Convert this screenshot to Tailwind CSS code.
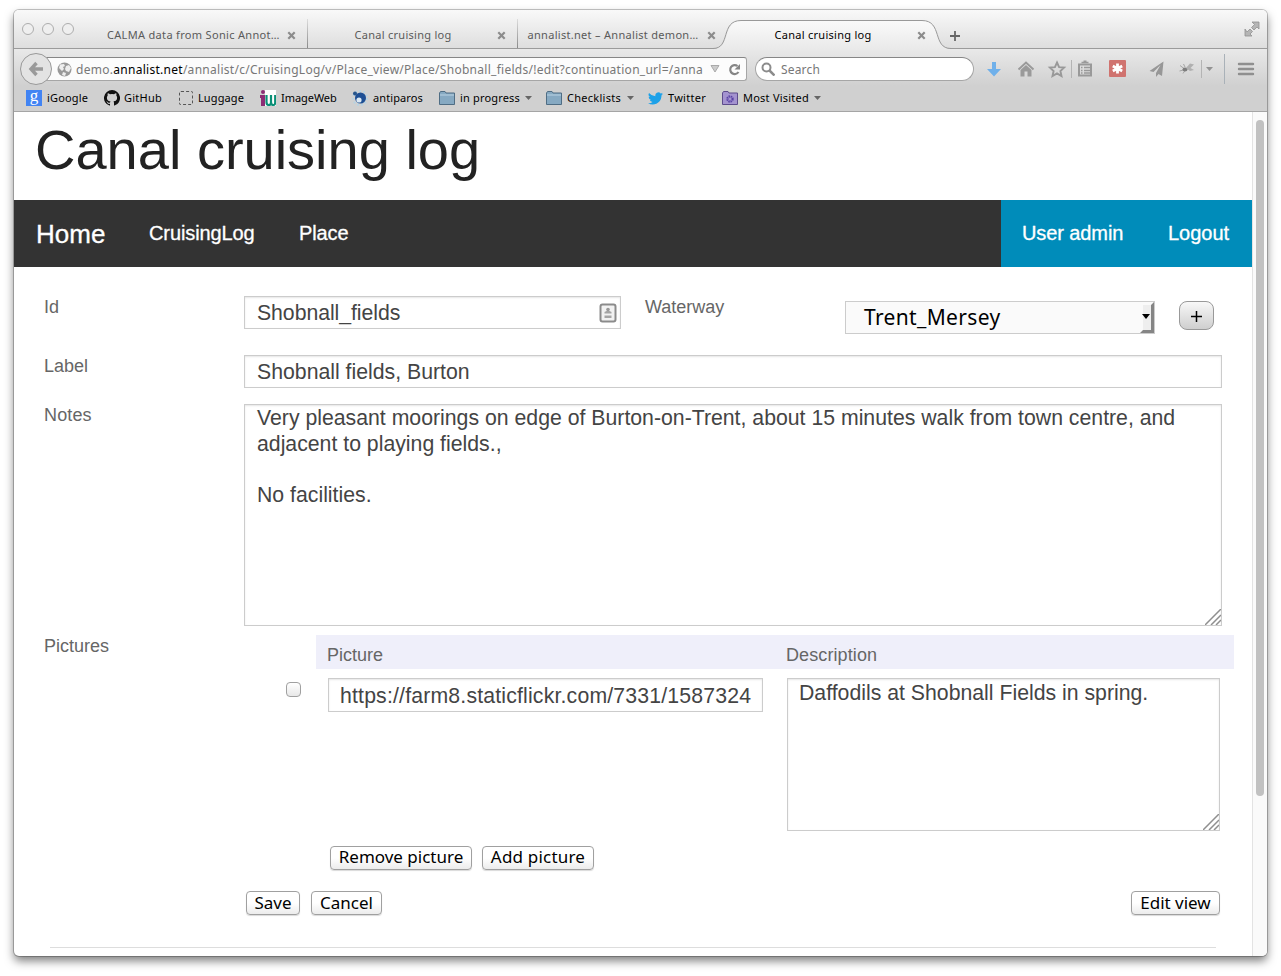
<!DOCTYPE html>
<html lang="en">
<head>
<meta charset="utf-8">
<title>Canal cruising log</title>
<script src="https://cdn.jsdelivr.net/npm/@tailwindcss/browser@4"></script>
</head>
<body class="bg-white overflow-hidden">
<svg width="0" height="0" class="absolute">
  <defs>
    <symbol id="x" viewBox="0 0 9 9"><path d="M1.3 1.3l6.4 6.4M7.7 1.3L1.3 7.7" stroke="#8c8c8c" stroke-width="2.2"/></symbol>
    <symbol id="folder" viewBox="0 0 16 14"><path d="M.5 13.500V2l1-1.500h4.500l1 1.500h8.500v11.500z" fill="#86a9c2" stroke="#4f6d84"/><path d="M1 4h14" stroke="#b9d2e3"/></symbol>
    <symbol id="grip" viewBox="0 0 16 16"><path d="M0 16L16 0M6 16L16 6M11 16l5-5" stroke="#8f8f8f" stroke-width="1.500"/></symbol>
  </defs>
</svg>
<div class="w-[1281px] h-[976px] pl-[14px] pt-[10px]">
<div class="w-[1253px] h-[946px] rounded-[5px] overflow-hidden flex flex-col bg-white shadow-[0_0_0_1px_rgba(0,0,0,0.22),0_5px_10px_rgba(0,0,0,0.5)] font-['Noto_Sans',sans-serif]">

  <!-- tab strip -->
  <div class="relative h-[39px] shrink-0 flex bg-linear-to-b from-[#f9f9f9] to-[#dedede] border-b border-[#9b9b9b] text-[11px] text-[#5a5a5a]">
    <svg class="absolute left-[686px] top-[10px]" width="260" height="30" viewBox="0 0 260 30">
      <defs><linearGradient id="tg" x1="0" y1="0" x2="0" y2="1"><stop offset="0" stop-color="#fafafa"/><stop offset="1" stop-color="#e9e9e9"/></linearGradient></defs>
      <path d="M14 30V28.500C31 28.500 22 .5 42 .5H222C242 .5 233 28.500 250 28.500V30z" fill="url(#tg)"/>
      <path d="M10 28.500H13C31 28.500 20 .5 41 .5H222C243 .5 232 28.500 251 28.500H254" fill="none" stroke="#999"/>
    </svg>
    <div class="flex w-[83px] gap-[8px] pl-[8px] pt-[13px]">
      <i class="size-3 rounded-full border border-[#adadad] bg-[#efefef]"></i><i class="size-3 rounded-full border border-[#adadad] bg-[#efefef]"></i><i class="size-3 rounded-full border border-[#adadad] bg-[#efefef]"></i>
    </div>
    <div class="relative flex items-center w-[211px] pl-[10px] pt-[12px]"><div class="w-[172px] text-center whitespace-nowrap tracking-[0.32px]">CALMA data from Sonic Annot…</div><svg class="ml-[8px] size-[9px]"><use href="#x"/></svg><i class="ml-auto mt-[-4px] w-px h-[29px] bg-linear-to-b from-[#ddd] to-[#8a8a8a]"></i></div>
    <div class="relative flex items-center w-[210px] pl-[9px] pt-[12px]"><div class="w-[172px] text-center whitespace-nowrap tracking-[0.27px]">Canal cruising log</div><svg class="ml-[8px] size-[9px]"><use href="#x"/></svg><i class="ml-auto mt-[-4px] w-px h-[29px] bg-linear-to-b from-[#ddd] to-[#8a8a8a]"></i></div>
    <div class="relative flex items-center w-[210px] pl-[9px] pt-[12px]"><div class="w-[172px] text-center whitespace-nowrap tracking-[0.3px]">annalist.net – Annalist demon…</div><svg class="ml-[8px] size-[9px]"><use href="#x"/></svg></div>
    <div class="relative flex items-center w-[210px] pl-[9px] pt-[12px] text-black"><div class="w-[172px] text-center whitespace-nowrap tracking-[0.27px]">Canal cruising log</div><svg class="ml-[8px] size-[9px]"><use href="#x"/></svg></div>
    <svg class="ml-[11px] mt-[20px]" width="12" height="12"><path d="M6 1v10M1 6h10" stroke="#666" stroke-width="1.800"/></svg>
    <svg class="ml-auto mr-[7px] mt-[11px]" width="16" height="16"><path d="M8 1h7v7l-2-2-3 3-2.500-2.500 3-3zM1 8v7h7l-2-2 2.500-2.500L6 8 3 11z" fill="#b5b5b5" stroke="#909090" stroke-width=".8"/></svg>
  </div>

  <!-- navigation toolbar -->
  <div class="h-[37px] shrink-0 flex items-center pt-[3px] bg-linear-to-b from-[#e9e9e9] to-[#d0d0d0] text-[12px] text-[#777]">
    <div class="relative z-10 ml-[6px] size-[32px] rounded-full border border-[#999] bg-[#e3e3e3] flex items-center justify-center"><svg width="16" height="16"><path d="M8.500 2L3 8l5.500 6M3 8h12" fill="none" stroke="#9a9a9a" stroke-width="3.400"/></svg></div>
    <div class="-ml-[6px] w-[701px] h-[24px] rounded-r-[3px] border border-[#a6a6a6] border-t-[#868686] bg-[#fcfcfc] flex items-center pl-[10px]">
      <svg width="15" height="15"><circle cx="7.500" cy="7.500" r="7" fill="#999"/><path d="M3 2.500l4-.5 1 2-2 1 1 2-2 2-3-3zM9 4l3-1 2 3-2 4-3-1-1-2zM6 10l3 1-1 3-3-1z" fill="#eee"/></svg>
      <div class="ml-[4px] mt-[2px] w-[627px] overflow-hidden whitespace-nowrap tracking-[0.278px]">demo.<b class="font-normal text-black">annalist.net</b>/annalist/c/CruisingLog/v/Place_view/Place/Shobnall_fields/!edit?continuation_url=/anna</div>
      <svg class="ml-[7px]" width="10" height="8"><path d="M1 .5h8L5 7z" fill="#ccc" stroke="#aaa"/></svg>
      <svg class="ml-[8px]" width="13" height="13"><path d="M10.500 9A4.500 4.500 0 1 1 9.500 3" fill="none" stroke="#858585" stroke-width="2.200"/><path d="M6.500 6.500H12V1z" fill="#858585"/></svg>
    </div>
    <div class="ml-[8px] w-[219px] h-[24px] rounded-full border border-[#a6a6a6] border-t-[#868686] bg-white flex items-center pl-[5px]">
      <svg width="14" height="14"><circle cx="5.500" cy="5.500" r="4" fill="none" stroke="#8c8c8c" stroke-width="2"/><path d="M8.500 8.500l5 5" stroke="#8c8c8c" stroke-width="2.500"/></svg>
      <span class="ml-[6px] mt-[2px] tracking-[0.17px]">Search</span>
    </div>
    <svg class="ml-[13px]" width="275" height="30" viewBox="987 54 275 30" fill="none">
      <path d="M992 62h4v7h5l-7 7.500-7-7.500h5z" fill="#6fb0ea"/>
      <path d="M1018.500 69.500l7.500-7 7.500 7" stroke="#9a9a9a" stroke-width="2"/><path d="M1020.500 70l5.500-5 5.500 5v6.500h-4v-5h-3v5h-4z" fill="#9a9a9a"/>
      <path d="M1057 62.500l2.100 4.600 5 .5-3.700 3.400 1.100 5-4.500-2.600-4.500 2.600 1.100-5-3.700-3.400 5-.5z" stroke="#999" stroke-width="1.900"/>
      <path d="M1071.500 60v18M1201.500 60v18" stroke="#b4b4b4"/>
      <path d="M1079 64.500h12v11h-12z" stroke="#999" stroke-width="2"/><path d="M1081.500 62.500h7M1081 67.500h1.500M1084 67.500h6M1081 70.500h1.500M1084 70.500h6M1081 73h1.500M1084 73h6" stroke="#999" stroke-width="1.300"/><path d="M1083.500 61.500h3" stroke="#999" stroke-width="2"/>
      <rect x="1109" y="60" width="17" height="17" rx="1" fill="#d0736f"/><path d="M1117.500 63.500v10M1112.800 66l9.400 5M1122.200 66l-9.400 5" stroke="#fff" stroke-width="2.800"/>
      <path d="M1163.500 61.500l-14 9.500 4 1 7-7-4.500 8v4l2.500-3 3.500 2z" fill="#979797"/>
      <path d="M1180 65.500l4 3M1179.500 71l4-1M1183 73.500l2-3M1183.500 64l1.500 3" stroke="#a5a5a5"/><ellipse cx="1185" cy="69.500" rx="2.500" ry="2" fill="#7d7d7d"/><path d="M1186 68l4-4.500 4 1-3.500 3.500 3.500 2-4 1z" fill="#b0b0b0"/>
      <path d="M1206 67h7l-3.500 4z" fill="#929292"/>
      <path d="M1224.500 54v30" stroke="#a9b1b8"/>
      <path d="M1239 64h14M1239 69h14M1239 74h14" stroke="#8f8f8f" stroke-width="2.400" stroke-linecap="round"/>
    </svg>
  </div>

  <!-- bookmarks bar -->
  <div class="h-[26px] shrink-0 flex items-center bg-[#d0d0d0] border-b border-[#a5a5a5] text-[11px] text-black whitespace-nowrap pb-px">
    <div class="w-[78px] pl-[12px] flex items-center gap-[5px] tracking-[0.15px]"><div class="size-[16px] bg-[#4284f3] text-white font-['Liberation_Serif',serif] text-[17px] leading-[12px] text-center">g</div>iGoogle</div>
    <div class="w-[74px] pl-[12px] flex items-center gap-[4px] tracking-[0.24px]"><svg width="16" height="16" viewBox="0 0 16 16"><path fill="#111" d="M8 0a8 8 0 0 0-2.530 15.590c.4.070.55-.17.55-.38v-1.340c-2.230.48-2.700-1.070-2.700-1.070-.36-.93-.89-1.180-.89-1.180-.73-.5.050-.49.050-.49.800.060 1.230.83 1.230.83.720 1.220 1.870.87 2.330.66.070-.52.280-.87.510-1.070-1.780-.2-3.640-.89-3.640-3.950 0-.87.310-1.590.82-2.150-.08-.2-.36-1.020.08-2.120 0 0 .67-.21 2.200.82a7.600 7.600 0 0 1 4 0c1.530-1.040 2.200-.82 2.200-.82.440 1.100.160 1.920.080 2.120.51.560.82 1.270.82 2.150 0 3.070-1.870 3.750-3.650 3.950.29.250.54.730.54 1.480v2.190c0 .21.150.46.550.38A8 8 0 0 0 8 0z"/></svg>GitHub</div>
    <div class="w-[81px] pl-[13px] flex items-center gap-[5px] tracking-[0.11px]"><div class="size-[14px] border border-dashed border-[#555] rounded-[2px]"></div>Luggage</div>
    <div class="w-[92px] pl-[13px] flex items-center gap-[5px] tracking-[-0.05px]"><svg width="16" height="16"><path d="M5 0h11v16H5z" fill="#fff"/><circle cx="3" cy="2" r="2" fill="#8c2d75"/><path d="M0 5h5v11H1V8H0z" fill="#8c2d75"/><path d="M6.500 5v7q0 3 2.300 3t2.200-3V5v7q0 3 2.200 3t2-3V5" fill="none" stroke="#0b8f76" stroke-width="2.200"/></svg>ImageWeb</div>
    <div class="w-[88px] pl-[13px] flex items-center gap-[5px] tracking-[0.11px]"><svg width="16" height="16"><circle cx="8" cy="8" r="7" fill="none" stroke="#b7d3e3" stroke-width="2" stroke-dasharray="2 2"/><circle cx="8.500" cy="8" r="5.500" fill="#1d4f95"/><circle cx="7" cy="10" r="2.600" fill="#dce9f3"/><circle cx="3" cy="3.500" r="2" fill="#27558c"/></svg>antiparos</div>
    <div class="w-[107px] pl-[12px] flex items-center gap-[5px] tracking-[0.17px]"><svg width="16" height="14"><use href="#folder"/></svg>in progress<svg width="7" height="5"><path d="M0 0h7L3.500 4z" fill="#666"/></svg></div>
    <div class="w-[102px] pl-[12px] flex items-center gap-[5px] tracking-[0.27px]"><svg width="16" height="14"><use href="#folder"/></svg>Checklists<svg class="ml-[1px]" width="7" height="5"><path d="M0 0h7L3.500 4z" fill="#666"/></svg></div>
    <div class="w-[73px] pl-[12px] flex items-center gap-[5px] tracking-[0.27px]"><svg width="15" height="13" viewBox="0 2 24 20"><path fill="#1da1e8" d="M24 4.560a9.800 9.800 0 0 1-2.830.78 4.940 4.940 0 0 0 2.170-2.720 9.900 9.900 0 0 1-3.130 1.190 4.920 4.920 0 0 0-8.380 4.480A14 14 0 0 1 1.670 3.150a4.920 4.920 0 0 0 1.520 6.570 4.900 4.900 0 0 1-2.230-.61 4.930 4.930 0 0 0 3.950 4.890 4.900 4.900 0 0 1-2.220.08 4.930 4.930 0 0 0 4.600 3.420A9.870 9.870 0 0 1 0 19.540 13.940 13.940 0 0 0 7.550 21.750c9.140 0 14.310-7.720 13.990-14.640A10 10 0 0 0 24 4.560z"/></svg>Twitter</div>
    <div class="pl-[13px] flex items-center gap-[5px] tracking-[0.23px]"><svg width="16" height="14"><path d="M.5 13.500V2l1-1.500h4.500l1 1.500h8.500v11.500z" fill="#a493cf" stroke="#5d4c8c"/><circle cx="8" cy="8" r="2.600" fill="none" stroke="#5a43a5" stroke-width="2.200" stroke-dasharray="1.400 .7"/></svg>Most Visited<svg width="7" height="5"><path d="M0 0h7L3.500 4z" fill="#666"/></svg></div>
  </div>

  <!-- page -->
  <div class="flex h-[844px] font-['Liberation_Sans',sans-serif]">
    <div class="w-[1238px] flex flex-col text-[#666]">
      <h1 class="h-[88px] pl-[21px] text-[56px] leading-[75px] text-[#222] whitespace-nowrap">Canal cruising log</h1>
      <nav class="h-[67px] shrink-0 bg-[#333] flex items-center text-white text-[20px] leading-[28px] whitespace-nowrap [-webkit-text-stroke:0.3px_white]">
        <div class="w-[113px] pl-[22px] text-[26px]">Home</div>
        <div class="w-[150px] pl-[22px] pb-[2px] tracking-[-0.1px]">CruisingLog</div>
        <div class="pl-[22px] pb-[2px] tracking-[-0.1px]">Place</div>
        <div class="ml-auto w-[251px] h-full bg-[#008cba] flex items-center pl-[21px] pb-[2px]"><div class="w-[146px] tracking-[-0.1px]">User admin</div><div>Logout</div></div>
      </nav>
      <div class="pl-[30px] pt-[29px] text-[18px]">
        <div class="flex h-[59px]">
          <div class="w-[200px] leading-[22px]">Id</div>
          <div class="w-[377px] h-[33px] border border-[#ccc] shadow-[inset_0_1px_2px_rgba(0,0,0,0.1)] flex items-center justify-between pl-[12px] pr-[3px] text-[21.250px] text-[#444]"><span class="pt-[2px] tracking-[-0.06px]">Shobnall_fields</span><svg width="18" height="20"><rect x="1.500" y="1.500" width="15" height="17" rx="2" fill="#f2f2f2" stroke="#8b8b8b" stroke-width="2"/><circle cx="9" cy="6.500" r="1.800" fill="#999"/><path d="M5.500 10.500h7v-1.500l-2-1h-3l-2 1zM5.500 12.500h7v2.500h-7z" fill="#a5a5a5"/></svg></div>
          <div class="ml-[24px] w-[200px] leading-[22px]">Waterway</div>
          <div class="mt-[5px] w-[310px] h-[33px] border border-[#ccc] bg-[#fafafa] flex items-center justify-between pl-[18px] font-['Noto_Sans',sans-serif] text-[21px] text-black tracking-[0.35px]">Trent_Mersey<svg width="14" height="31"><path d="M3 3h8v26H3z" fill="#eee"/><path d="M0 31l3-3h8V3l3-3v31z" fill="#858585"/><path d="M2 12h8l-4 5z" fill="#000"/></svg></div>
          <div class="ml-[24px] mt-[5px] w-[35px] h-[29px] rounded-[8px] border border-[#999] bg-linear-to-b from-[#f8f8f8] to-[#cfcfcf] flex items-center justify-center"><svg class="mt-[2px]" width="11" height="11"><path d="M5.500 0v11M0 5.500h11" stroke="#000" stroke-width="1.500"/></svg></div>
        </div>
        <div class="flex h-[49px]">
          <div class="w-[200px] leading-[22px]">Label</div>
          <div class="w-[978px] h-[33px] border border-[#ccc] shadow-[inset_0_1px_2px_rgba(0,0,0,0.1)] flex items-center pl-[12px] pt-[2px] text-[21.250px] text-[#444]">Shobnall fields, Burton</div>
        </div>
        <div class="flex h-[231px]">
          <div class="w-[200px] leading-[22px] tracking-[0.15px]">Notes</div>
          <div class="relative w-[978px] h-[222px] border border-[#ccc] shadow-[inset_0_1px_2px_rgba(0,0,0,0.1)] pl-[12px] pt-px text-[21.250px] leading-[25.600px] text-[#444] whitespace-nowrap">Very pleasant moorings on edge of Burton-on-Trent, about 15 minutes walk from town centre, and<br>adjacent to playing fields.,<br><br>No facilities.<svg class="absolute right-0 bottom-0 size-[16px]"><use href="#grip"/></svg></div>
        </div>
        <div class="flex h-[256px]">
          <div class="w-[200px] leading-[22px]">Pictures</div>
          <div class="w-[72px] pl-[42px] pt-[47px]"><div class="size-[15px] rounded-[4px] border border-[#a0a0a0] bg-linear-to-b from-white to-[#e8e8e8]"></div></div>
          <div class="w-[918px]">
            <div class="h-[34px] bg-[#efeffa] flex pl-[11px] leading-[40px]"><div class="w-[459px]">Picture</div><div class="tracking-[0.1px]">Description</div></div>
            <div class="pt-[9px] pl-[12px] flex gap-[24px] text-[21.250px] text-[#444] whitespace-nowrap">
              <div class="w-[435px] h-[34px] border border-[#ccc] shadow-[inset_0_1px_2px_rgba(0,0,0,0.1)] flex items-center pl-[11px] pt-[3px] tracking-[0.17px]">https://farm8.staticflickr.com/7331/1587324</div>
              <div class="relative w-[433px] h-[153px] border border-[#ccc] shadow-[inset_0_1px_2px_rgba(0,0,0,0.1)] pl-[11px] pt-px leading-[27px]">Daffodils at Shobnall Fields in spring.<svg class="absolute right-0 bottom-0 size-[16px]"><use href="#grip"/></svg></div>
            </div>
            <div class="pt-[15px] pl-[14px] flex gap-[10px] font-['Noto_Sans',sans-serif] text-[17px] text-black whitespace-nowrap">
              <div class="w-[142px] h-[24px] pb-[2px] rounded-[4px] border border-[#a0a0a0] bg-linear-to-b from-white from-50% to-[#ececec] shadow-[0_1px_1px_rgba(0,0,0,0.15)] flex items-center justify-center">Remove picture</div>
              <div class="w-[112px] h-[24px] pb-[2px] rounded-[4px] border border-[#a0a0a0] bg-linear-to-b from-white from-50% to-[#ececec] shadow-[0_1px_1px_rgba(0,0,0,0.15)] flex items-center justify-center tracking-[0.2px]">Add picture</div>
            </div>
          </div>
        </div>
        <div class="flex pl-[202px] w-[1176px] h-[56px] font-['Noto_Sans',sans-serif] text-[17px] text-black whitespace-nowrap">
          <div class="w-[54px] h-[24px] rounded-[4px] border border-[#a0a0a0] bg-linear-to-b from-white from-50% to-[#ececec] shadow-[0_1px_1px_rgba(0,0,0,0.15)] flex items-center justify-center">Save</div>
          <div class="ml-[11px] w-[71px] h-[24px] rounded-[4px] border border-[#a0a0a0] bg-linear-to-b from-white from-50% to-[#ececec] shadow-[0_1px_1px_rgba(0,0,0,0.15)] flex items-center justify-center">Cancel</div>
          <div class="ml-auto w-[89px] h-[24px] rounded-[4px] border border-[#a0a0a0] bg-linear-to-b from-white from-50% to-[#ececec] shadow-[0_1px_1px_rgba(0,0,0,0.15)] flex items-center justify-center">Edit view</div>
        </div>
        <div class="ml-[6px] w-[1166px] h-px bg-[#ddd]"></div>
      </div>
    </div>
    <div class="w-[15px] bg-[#fafafa] border-l border-[#e3e3e3] pl-[3px] pt-[8px]"><div class="w-[8px] h-[676px] rounded-full bg-[#c1c1c1]"></div></div>
  </div>
</div>
</div>
</body>
</html>
